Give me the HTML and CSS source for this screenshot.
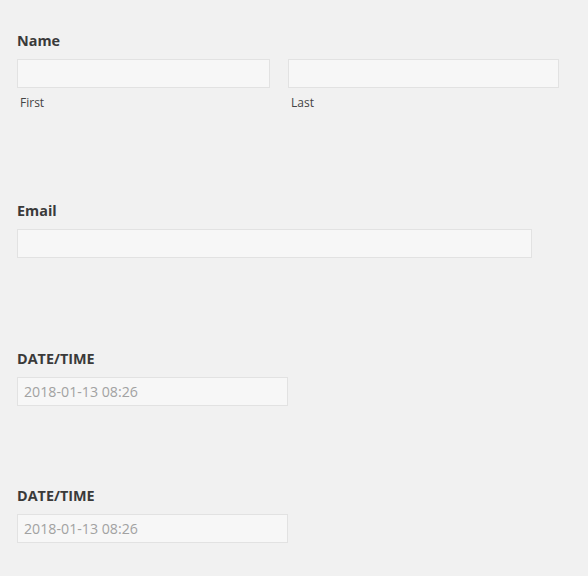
FILE: index.html
```html
<!DOCTYPE html>
<html lang="en">
<head>
<meta charset="utf-8">
<title>Form</title>
<link rel="stylesheet" href="styles.css">
</head>
<body>
<form class="form">
  <div class="field field-name">
    <label class="label">Name</label>
    <div class="name-row">
      <div class="name-part">
        <input class="input input-first" type="text">
        <span class="sublabel">First</span>
      </div>
      <div class="name-part">
        <input class="input input-last" type="text">
        <span class="sublabel">Last</span>
      </div>
    </div>
  </div>
  <div class="field field-email">
    <label class="label">Email</label>
    <input class="input input-email" type="text">
  </div>
  <div class="field field-date">
    <label class="label">DATE/TIME</label>
    <input class="input input-date" type="text" placeholder="2018-01-13 08:26">
  </div>
  <div class="field field-date field-last">
    <label class="label">DATE/TIME</label>
    <input class="input input-date" type="text" placeholder="2018-01-13 08:26">
  </div>
</form>
</body>
</html>
```
FILE: styles.css
```css
html, body {
  margin: 0;
  padding: 0;
  background: #f1f1f1;
}
body {
  font-family: "Open Sans", "Noto Sans", sans-serif;
  color: #333;
}
.form {
  display: flex;
  flex-direction: column;
  padding: 31px 0 0 17px;
}
.field {
  display: flex;
  flex-direction: column;
  margin-bottom: 91px;
}
.field-name {
  margin-bottom: 90px;
}
.field-date {
  margin-bottom: 80px;
}
.field-last {
  margin-bottom: 0;
}
.label {
  font-size: 14.4px;
  font-weight: 700;
  line-height: 20px;
  color: #3a3a3a;
  margin-bottom: 8px;
}
.name-row {
  display: flex;
  gap: 18px;
}
.name-part {
  display: flex;
  flex-direction: column;
}
.input {
  box-sizing: border-box;
  height: 29px;
  margin: 0;
  padding: 0 6px;
  border: 1px solid #e2e2e2;
  background: #f7f7f7;
  font-family: "Open Sans", "Noto Sans", sans-serif;
  font-size: 14.2px;
  color: #555;
  outline: none;
  border-radius: 0;
}
.input::placeholder {
  color: #a2a2a2;
  opacity: 1;
}
.input-first { width: 253px; }
.input-last { width: 271px; }
.input-email { width: 515px; }
.input-date { width: 271px; }
.sublabel {
  font-size: 12px;
  line-height: 16px;
  color: #444;
  margin-top: 7px;
  padding-left: 3px;
}
```
